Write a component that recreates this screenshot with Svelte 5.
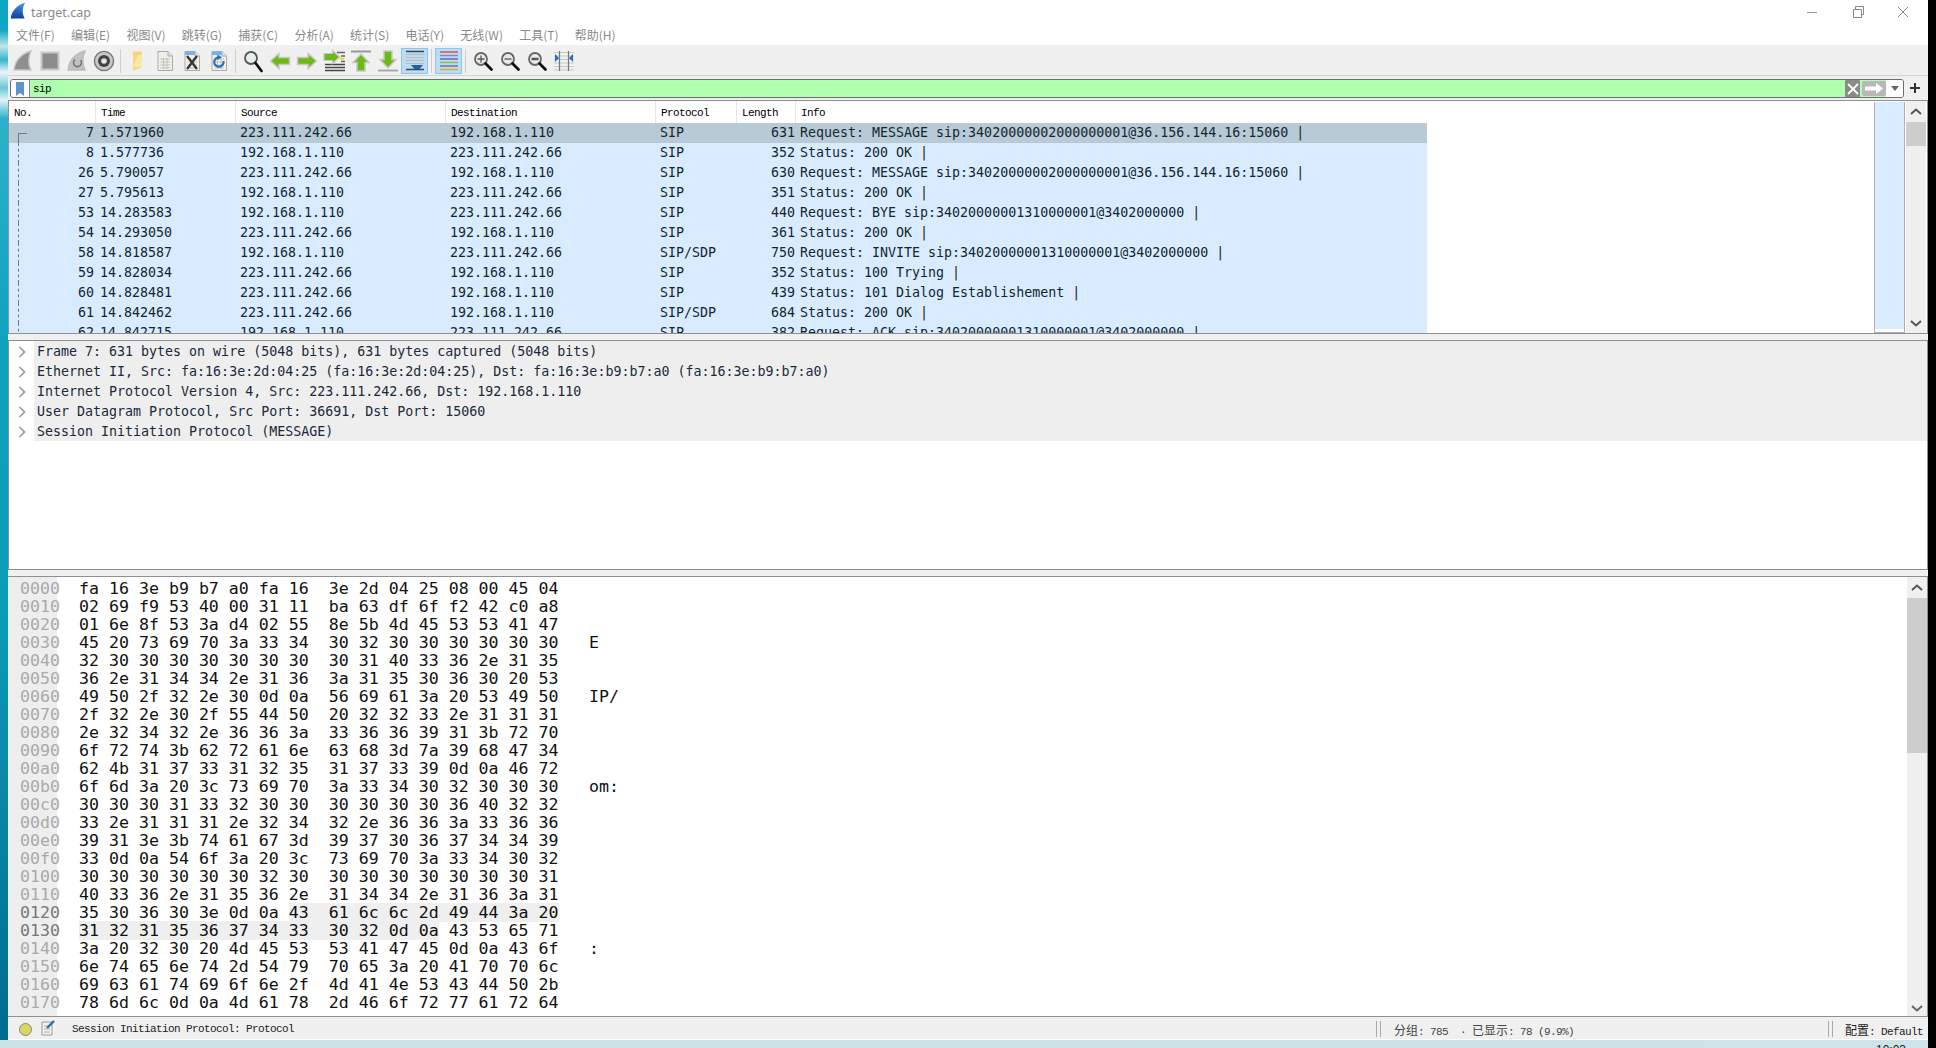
<script>
  const menus = ['文件(F)','编辑(E)','视图(V)','跳转(G)','捕获(C)','分析(A)','统计(S)','电话(Y)','无线(W)','工具(T)','帮助(H)'];
  const cols = ['No.','Time','Source','Destination','Protocol','Length','Info'];
  const A='223.111.242.66', B='192.168.1.110';
  const M='Request: MESSAGE sip:34020000002000000001@36.156.144.16:15060 |';
  const packets = [
    [7,'1.571960',A,B,'SIP',631,M],
    [8,'1.577736',B,A,'SIP',352,'Status: 200 OK |'],
    [26,'5.790057',A,B,'SIP',630,M],
    [27,'5.795613',B,A,'SIP',351,'Status: 200 OK |'],
    [53,'14.283583',B,A,'SIP',440,'Request: BYE sip:34020000001310000001@3402000000 |'],
    [54,'14.293050',A,B,'SIP',361,'Status: 200 OK |'],
    [58,'14.818587',B,A,'SIP/SDP',750,'Request: INVITE sip:34020000001310000001@3402000000 |'],
    [59,'14.828034',A,B,'SIP',352,'Status: 100 Trying |'],
    [60,'14.828481',A,B,'SIP',439,'Status: 101 Dialog Establishement |'],
    [61,'14.842462',A,B,'SIP/SDP',684,'Status: 200 OK |'],
    [62,'14.842715',B,A,'SIP',382,'Request: ACK sip:34020000001310000001@3402000000 |'],
  ];
  const details = [
    'Frame 7: 631 bytes on wire (5048 bits), 631 bytes captured (5048 bits)',
    'Ethernet II, Src: fa:16:3e:2d:04:25 (fa:16:3e:2d:04:25), Dst: fa:16:3e:b9:b7:a0 (fa:16:3e:b9:b7:a0)',
    'Internet Protocol Version 4, Src: 223.111.242.66, Dst: 192.168.1.110',
    'User Datagram Protocol, Src Port: 36691, Dst Port: 15060',
    'Session Initiation Protocol (MESSAGE)',
  ];
  const hex = [
    ['0000','fa 16 3e b9 b7 a0 fa 16','3e 2d 04 25 08 00 45 04',''],
    ['0010','02 69 f9 53 40 00 31 11','ba 63 df 6f f2 42 c0 a8',''],
    ['0020','01 6e 8f 53 3a d4 02 55','8e 5b 4d 45 53 53 41 47',''],
    ['0030','45 20 73 69 70 3a 33 34','30 32 30 30 30 30 30 30','E'],
    ['0040','32 30 30 30 30 30 30 30','30 31 40 33 36 2e 31 35',''],
    ['0050','36 2e 31 34 34 2e 31 36','3a 31 35 30 36 30 20 53',''],
    ['0060','49 50 2f 32 2e 30 0d 0a','56 69 61 3a 20 53 49 50','IP/'],
    ['0070','2f 32 2e 30 2f 55 44 50','20 32 32 33 2e 31 31 31',''],
    ['0080','2e 32 34 32 2e 36 36 3a','33 36 36 39 31 3b 72 70',''],
    ['0090','6f 72 74 3b 62 72 61 6e','63 68 3d 7a 39 68 47 34',''],
    ['00a0','62 4b 31 37 33 31 32 35','31 37 33 39 0d 0a 46 72',''],
    ['00b0','6f 6d 3a 20 3c 73 69 70','3a 33 34 30 32 30 30 30','om:'],
    ['00c0','30 30 30 31 33 32 30 30','30 30 30 30 36 40 32 32',''],
    ['00d0','33 2e 31 31 31 2e 32 34','32 2e 36 36 3a 33 36 36',''],
    ['00e0','39 31 3e 3b 74 61 67 3d','39 37 30 36 37 34 34 39',''],
    ['00f0','33 0d 0a 54 6f 3a 20 3c','73 69 70 3a 33 34 30 32',''],
    ['0100','30 30 30 30 30 30 32 30','30 30 30 30 30 30 30 31',''],
    ['0110','40 33 36 2e 31 35 36 2e','31 34 34 2e 31 36 3a 31',''],
    ['0120','35 30 36 30 3e 0d 0a 43','61 6c 6c 2d 49 44 3a 20','',21,48],
    ['0130','31 32 31 35 36 37 34 33','30 32 0d 0a 43 53 65 71','',0,36],
    ['0140','3a 20 32 30 20 4d 45 53','53 41 47 45 0d 0a 43 6f',':'],
    ['0150','6e 74 65 6e 74 2d 54 79','70 65 3a 20 41 70 70 6c',''],
    ['0160','69 63 61 74 69 6f 6e 2f','4d 41 4e 53 43 44 50 2b',''],
    ['0170','78 6d 6c 0d 0a 4d 61 78','2d 46 6f 72 77 61 72 64',''],
  ];
  function seg(r){
    const l = r[1] + '  ' + r[2];
    if (r[4] === undefined) return [l,'',''];
    return [l.slice(0,r[4]), l.slice(r[4],r[5]), l.slice(r[5])];
  }
</script>

{#snippet fin(fill, stroke)}
  <path d="M3 21 C4 12 10 5 20 2 C17 9 17 15 20 21 Z" fill={fill} stroke={stroke} stroke-width="1.4"/>
{/snippet}

{#snippet doc(fill)}
  <path d="M5 2.5 H15 L19.5 7 V21.5 H5 Z" fill={fill} stroke="#aaa" stroke-width="1"/>
  <path d="M15 2.5 V7 H19.5" fill="#e4e4e4" stroke="#aaa" stroke-width="1"/>
  <path d="M7.5 10 H17 M7.5 13 H17 M7.5 16 H17 M7.5 19 H17 M10.5 9 V20 M14 9 V20" stroke="#c4c4b4" stroke-width="1"/>
{/snippet}

{#snippet lens(inner, w)}
  <circle cx="10" cy="10" r="6" fill="#e8e8e8" stroke="#666" stroke-width="1.8"/>
  <path d="M14.5 14.5 L20.5 20.5" stroke="#111" stroke-width="2.8" stroke-linecap="round"/>
  <path d={inner} stroke="#555" stroke-width={w} fill="none"/>
{/snippet}

<div class="page">
  <div class="desk">
    <div class="main">
      <div class="strip"></div>
      <div class="window">
        <header class="title">
          <svg class="logo" width="16" height="19" viewBox="0 0 24 24">
            <defs><linearGradient id="sh" x1="0" y1="0" x2="0" y2="1"><stop offset="0" stop-color="#4a96e8"/><stop offset="1" stop-color="#0c3f9e"/></linearGradient></defs>
            <path d="M1 24 C2 13 10 4 23 0 C18 8 18 16 22 24 Z" fill="url(#sh)"/>
          </svg>
          <span class="tname">target.cap</span>
          <div class="winbtns">
            <svg width="14" height="14" viewBox="0 0 14 14"><path d="M2 7.5H12" stroke="#999" stroke-width="1"/></svg>
            <svg width="14" height="14" viewBox="0 0 14 14"><path d="M2.5 4.5H10.5V12.5H2.5Z M4.5 4.5V1.5H12.5V9.5H10.5" fill="none" stroke="#888" stroke-width="1"/></svg>
            <svg width="14" height="14" viewBox="0 0 14 14"><path d="M2 2L12 12M12 2L2 12" stroke="#888" stroke-width="1"/></svg>
          </div>
        </header>

        <nav class="menu">
          {#each menus as m}<span>{m}</span>{/each}
        </nav>

        <div class="toolbar">
          <span class="tb"><svg width="24" height="24" viewBox="0 0 24 24">{@render fin('#8f8f8f','#c8c8c8')}</svg></span>
          <span class="tb"><svg width="24" height="24" viewBox="0 0 24 24"><rect x="3.5" y="3.5" width="17" height="17" fill="#8c8c8c" stroke="#c8c8c8" stroke-width="2"/></svg></span>
          <span class="tb"><svg width="24" height="24" viewBox="0 0 24 24">{@render fin('#c2c2c2','#bcbcbc')}<path d="M15.5 11 A4 4 0 1 1 10 10.5" fill="none" stroke="#777" stroke-width="1.6"/></svg></span>
          <span class="tb"><svg width="24" height="24" viewBox="0 0 24 24"><circle cx="12" cy="12" r="9.6" fill="#c8c8c8" stroke="#777" stroke-width="1.4"/><circle cx="12" cy="12" r="6" fill="#444"/><circle cx="12" cy="12" r="2.8" fill="#e8e8e8"/></svg></span>
          <i class="sep"></i>
          <span class="tb"><svg width="24" height="24" viewBox="0 0 24 24"><path d="M7 2.5H16V18L7 22Z" fill="#f7d77a"/><path d="M12 6H16V18H7" fill="#fbe7a6"/></svg></span>
          <span class="tb"><svg width="24" height="24" viewBox="0 0 24 24">{@render doc('#eeeeea')}</svg></span>
          <span class="tb"><svg width="24" height="24" viewBox="0 0 24 24">{@render doc('#f4f2e4')}<path d="M5 2.5H15V6H5Z" fill="#74b2e8"/><path d="M7 7L17 20M17 7L7 20" stroke="#333" stroke-width="2.2"/></svg></span>
          <span class="tb"><svg width="24" height="24" viewBox="0 0 24 24">{@render doc('#f4f2e4')}<path d="M5 2.5H15V6H5Z" fill="#74b2e8"/><path d="M16.5 12 A4.7 4.7 0 1 1 12 8.3" fill="none" stroke="#2a6fc0" stroke-width="2.2"/><path d="M10.5 5.5L15 8.3L10.5 11Z" fill="#2a6fc0"/></svg></span>
          <i class="sep"></i>
          <span class="tb"><svg width="24" height="24" viewBox="0 0 24 24"><circle cx="10" cy="9" r="6" fill="#e6eef0" stroke="#555" stroke-width="1.8"/><path d="M14.5 14 L20.5 22" stroke="#111" stroke-width="2.8" stroke-linecap="round"/></svg></span>
          <span class="tb"><svg width="24" height="24" viewBox="0 0 24 24"><path d="M2.5 12 L11 4.5 V8.5 H21.5 V15.5 H11 V19.5 Z" fill="#6cb814" stroke="#c8c8c8" stroke-width="1.5"/></svg></span>
          <span class="tb"><svg width="24" height="24" viewBox="0 0 24 24"><path d="M21.5 12 L13 4.5 V8.5 H2.5 V15.5 H13 V19.5 Z" fill="#6cb814" stroke="#c8c8c8" stroke-width="1.5"/></svg></span>
          <span class="tb"><svg width="24" height="24" viewBox="0 0 24 24"><path d="M15 3.5H23M19 7H23M19 12.5H23" stroke="#666" stroke-width="1.3"/><path d="M18 9.7H22" stroke="#f0d020" stroke-width="2"/><path d="M3 15.5H23M3 18.5H23M3 21.5H23" stroke="#444" stroke-width="1.5"/><path d="M17.5 8 L10.5 1.5 V4.5 H2 V11.5 H10.5 V14.5 Z" fill="#6cb814" stroke="#c8c8c8" stroke-width="1.2"/></svg></span>
          <span class="tb"><svg width="24" height="24" viewBox="0 0 24 24"><path d="M2 2.5H22" stroke="#999" stroke-width="2"/><path d="M12 5 L20 13.5 H16 V22 H8 V13.5 H4 Z" fill="#6cb814" stroke="#c8c8c8" stroke-width="1.5"/></svg></span>
          <span class="tb"><svg width="24" height="24" viewBox="0 0 24 24"><path d="M2 21.5H22" stroke="#aaa" stroke-width="2"/><path d="M12 19 L20 10.5 H16 V2 H8 V10.5 H4 Z" fill="#6cb814" stroke="#c8c8c8" stroke-width="1.5"/></svg></span>
          <span class="tb on"><svg width="24" height="24" viewBox="0 0 24 24"><path d="M3 2.5H21M3 20.5H21" stroke="#444" stroke-width="1.4"/><path d="M3 5.5H21M3 8.5H21M3 11.5H21M3 14.5H21" stroke="#bbb" stroke-width="1.2"/><path d="M8 16H20L16.5 20H11.5Z" fill="#1f5fa8"/></svg></span>
          <i class="sep"></i>
          <span class="tb on"><svg width="24" height="24" viewBox="0 0 24 24"><path d="M3 3H21" stroke="#d85050" stroke-width="1.5"/><path d="M3 6.5H21" stroke="#8888c0" stroke-width="1.5"/><path d="M3 10H21" stroke="#6a6ab0" stroke-width="1.5"/><path d="M3 13.5H21" stroke="#88c040" stroke-width="1.5"/><path d="M3 17H21" stroke="#7070a8" stroke-width="1.5"/><path d="M3 20.5H21" stroke="#d8b030" stroke-width="1.5"/></svg></span>
          <i class="sep"></i>
          <span class="tb"><svg width="24" height="24" viewBox="0 0 24 24">{@render lens('M6.5 10H13.5M10 6.5V13.5', 1.3)}</svg></span>
          <span class="tb"><svg width="24" height="24" viewBox="0 0 24 24">{@render lens('M6.5 10H13.5', 1.3)}</svg></span>
          <span class="tb"><svg width="24" height="24" viewBox="0 0 24 24">{@render lens('M6.5 10H13.5', 2.4)}</svg></span>
          <span class="tb"><svg width="24" height="24" viewBox="0 0 24 24"><path d="M2 3.5H22M2 7H22M2 10.5H22M2 14H22M2 17.5H22M2 21H22" stroke="#c8c8c8" stroke-width="1.2"/><path d="M7.5 2V22M16.5 2V22" stroke="#777" stroke-width="1.2"/><path d="M3 5V13L7 9Z M21 5V13L17 9Z" fill="#2a6fc0"/></svg></span>
        </div>

        <div class="filterrow">
          <div class="filter">
            <span class="bm"><svg width="10" height="14" viewBox="0 0 10 14"><path d="M1 0H9V14L5 11L1 14Z" fill="#5f92cf"/></svg></span>
            <span class="ftext">sip</span>
            <span class="fclear"><svg width="14" height="14" viewBox="0 0 14 14"><path d="M2 2L12 12M12 2L2 12" stroke="#fff" stroke-width="1.8"/></svg></span>
            <span class="fapply"><svg width="18" height="11" viewBox="0 0 18 11"><path d="M0 3.5H11V0L18 5.5L11 11V7.5H0Z" fill="#fff"/></svg></span>
            <span class="fdrop"><svg width="8" height="5" viewBox="0 0 8 5"><path d="M0 0H8L4 5Z" fill="#666"/></svg></span>
          </div>
          <span class="plus"><svg width="10" height="10" viewBox="0 0 10 10"><path d="M5 0V10M0 5H10" stroke="#333" stroke-width="2"/></svg></span>
        </div>

        <section class="plist">
          <div class="ptable">
            <div class="phead">
              {#each cols as c}<span class="hcell">{c}</span>{/each}
            </div>
            <div class="pbody">
              {#each packets as p, i}
                <div class="prow" class:sel={i === 0}>
                  <span class="rel" class:first={i === 0}></span>
                  <span class="no">{p[0]}</span>
                  <span class="time">{p[1]}</span>
                  <span class="addr">{p[2]}</span>
                  <span class="addr">{p[3]}</span>
                  <span class="proto">{p[4]}</span>
                  <span class="len">{p[5]}</span>
                  <span class="info">{p[6]}</span>
                </div>
              {/each}
            </div>
          </div>
          <div class="mini"></div>
          <div class="sbar">
            <svg class="up" width="12" height="7" viewBox="0 0 12 7"><path d="M1 6L6 1.5L11 6" fill="none" stroke="#555" stroke-width="2"/></svg>
            <div class="thumb small"></div>
            <div class="grow"></div>
            <svg width="12" height="7" viewBox="0 0 12 7"><path d="M1 1L6 5.5L11 1" fill="none" stroke="#555" stroke-width="2"/></svg>
          </div>
        </section>

        <div class="split"></div>

        <section class="dpanel">
          {#each details as d}
            <div class="drow">
              <svg width="8" height="12" viewBox="0 0 8 12"><path d="M1.5 1L6.5 6L1.5 11" fill="none" stroke="#999" stroke-width="1.6"/></svg>
              <span class="dtext">{d}</span>
            </div>
          {/each}
        </section>

        <div class="split"></div>

        <section class="hpanel">
          <div class="hexwrap">
            {#each hex as r}
              {@const s = seg(r)}
              <div class="hrow">
                <span class="off" class:dark={r[4] !== undefined}>{r[0]}</span>
                <span class="bytes">{s[0]}<span class="hl">{s[1]}</span>{s[2]}</span>
                <span class="asc">{r[3]}</span>
              </div>
            {/each}
          </div>
          <div class="sbar hs">
            <svg class="up" width="12" height="7" viewBox="0 0 12 7"><path d="M1 6L6 1.5L11 6" fill="none" stroke="#555" stroke-width="2"/></svg>
            <div class="thumb big"></div>
            <div class="grow"></div>
            <svg width="12" height="7" viewBox="0 0 12 7"><path d="M1 1L6 5.5L11 1" fill="none" stroke="#666" stroke-width="2"/></svg>
          </div>
        </section>

        <footer class="status">
          <span class="dot"></span>
          <svg class="note" width="14" height="16" viewBox="0 0 14 16"><path d="M1 2H11V15H1Z" fill="#f4f4ec" stroke="#999" stroke-width="1"/><path d="M3 6H9M3 9H9M3 12H9" stroke="#aaa" stroke-width="1"/><path d="M6 8L13 1" stroke="#2c6fb0" stroke-width="2.4"/></svg>
          <span class="smsg">Session Initiation Protocol: Protocol</span>
          <span class="grip"></span>
          <span class="mid"><b>分组</b>: 785  ·  <b>已显示</b>: 78 (9.9%)</span>
          <span class="grip"></span>
          <span class="prof"><b>配置</b>: Default</span>
        </footer>
      </div>
    </div>
    <div class="band"><span class="clock">10:03</span></div>
  </div>
  <div class="black"></div>
</div>

<style>
  :global(body){margin:0;background:#000;overflow:hidden;}
  .page{display:flex;width:1936px;height:1048px;overflow:hidden;font-family:"DejaVu Sans Mono","Liberation Mono",monospace;}
  .desk{width:1928px;height:1048px;display:flex;flex-direction:column;}
  .black{width:8px;background:#000;}
  .main{display:flex;height:1040px;}
  .strip{width:8px;background:linear-gradient(180deg,#10a4c4 0,#12a6c6 30px,#bfe7ee 46px,#39b5cf 60px,#e8f6f8 72px,#6cc8da 88px,#dff3f6 100px,#2fb0ca 118px,#0fa3c0 330px,#0a9dbb 600px,#0a86a6 800px,#006b8c 1040px);}
  .window{width:1920px;display:flex;flex-direction:column;background:#fff;}
  .band{height:8px;background:linear-gradient(90deg,#cbe2e7,#cde3e8);position:relative;overflow:hidden;}
  .clock{position:absolute;left:1876px;top:3px;font:12px "Liberation Sans",sans-serif;color:#222;}

  .title{height:24px;display:flex;align-items:center;padding-left:2px;}
  .logo{margin-top:-4px;}
  .tname{font:12.5px "Noto Sans","Liberation Sans",sans-serif;color:#8a8a8a;margin-left:5px;}
  .winbtns{margin-left:auto;display:flex;gap:31.5px;padding-right:18px;margin-top:-1px;}

  .menu{height:21px;display:flex;gap:16.25px;padding-left:8px;align-items:center;font:12px "Noto Sans CJK SC",sans-serif;color:#8a8a8a;border-bottom:1px solid #efefef;}
  .menu span{white-space:nowrap;}

  .toolbar{height:29px;background:#f0f0f0;border-bottom:1px solid #d4d4d4;display:flex;align-items:center;padding-left:1px;}
  .tb{width:27px;height:26px;display:flex;align-items:center;justify-content:center;box-sizing:border-box;flex:none;}
  .tb.on{background:#bcdcf4;border:1px solid #8ec5f0;}
  .sep{width:1px;height:24px;background:#cfcfcf;margin:0 3px;flex:none;}

  .filterrow{height:24px;background:#f0f0f0;display:flex;align-items:center;padding-left:2px;}
  .filter{width:1894px;height:19px;margin-top:1px;border:1px solid #6d6d6d;border-radius:3px;background:#afffaf;display:flex;align-items:center;box-sizing:border-box;overflow:hidden;}
  .bm{width:18px;height:100%;background:#fff;border-right:1px solid #888;display:flex;align-items:center;justify-content:center;flex:none;}
  .ftext{font:11px "Liberation Mono",monospace;letter-spacing:-.6px;color:#000;margin-left:3px;flex:1;}
  .fclear{width:15px;height:17px;background:#8a8a8a;display:flex;align-items:center;justify-content:center;border-radius:1px;}
  .fapply{width:24px;height:15px;margin-left:2px;background:#b8b8b8;border-radius:2px;display:flex;align-items:center;justify-content:center;}
  .fdrop{width:17px;height:100%;background:#fff;display:flex;align-items:center;justify-content:center;}
  .plus{width:22px;display:flex;justify-content:center;}

  .plist{height:234px;display:flex;border:1px solid #8f8f96;box-sizing:border-box;background:#fff;overflow:hidden;}
  .ptable{width:1865px;overflow:hidden;flex:none;}
  .phead{height:22px;display:flex;font:11px "Liberation Mono",monospace;letter-spacing:-.6px;color:#000;}
  .hcell{box-sizing:border-box;padding-left:5px;line-height:24px;border-right:1px solid #e6e6e6;}
  .hcell:nth-child(1){width:87px}
  .hcell:nth-child(2){width:140px}
  .hcell:nth-child(3){width:210px}
  .hcell:nth-child(4){width:210px}
  .hcell:nth-child(5){width:81px}
  .hcell:nth-child(6){width:59px}
  .hcell:nth-child(7){border-right:0}
  .pbody{height:210px;overflow:hidden;}
  .prow{width:1418px;height:20px;display:flex;background:#d9ecff;font-size:13.3px;line-height:20px;color:#12272e;position:relative;white-space:pre;}
  .prow.sel{background:#b9cad7;}
  .rel{position:absolute;left:9px;top:0;height:20px;border-left:1px dashed #777;}
  .rel.first{top:10px;height:10px;width:8px;border-left:1px solid #777;border-top:1px solid #777;}
  .no{width:85px;text-align:right;flex:none;}
  .time{width:146px;padding-left:6px;box-sizing:border-box;flex:none;}
  .addr{width:210px;flex:none;}
  .proto{width:81px;flex:none;}
  .len{width:54px;text-align:right;flex:none;}
  .info{padding-left:5px;}
  .mini{width:31px;background:#d9ecff;border:1px solid #b0b0b0;border-width:0 1px 1px 1px;box-shadow:inset 0 -3px 0 #fff;box-sizing:border-box;flex:none;margin-top:1px;}
  .sbar{width:20px;background:#f0f0f0;display:flex;flex-direction:column;align-items:center;margin-left:1px;padding-bottom:6px;box-sizing:border-box;flex:none;}
  .sbar .up{margin-top:7px;}
  .thumb{width:100%;background:#cdcdcd;flex:none;}
  .thumb.small{height:24px;margin-top:7px;}
  .thumb.big{height:155px;margin-top:7px;}
  .grow{flex:1;}

  .split{height:6px;background:#f0f0f0;}
  .dpanel{height:230px;border:1px solid #8f8f96;box-sizing:border-box;background:#fff;font-size:13.3px;color:#1a2a3a;}
  .drow{height:20px;display:flex;align-items:center;}
  .drow svg{margin-left:9px;margin-right:8px;flex:none;margin-top:1px;}
  .dtext{flex:1;height:20px;background:#eeeeee;line-height:22px;white-space:pre;padding-left:3px;}

  .hpanel{height:441px;display:flex;border-top:1px solid #8f8f96;border-bottom:1px solid #8f8f96;border-right:1px solid #8f8f96;box-sizing:border-box;background:#fff;}
  .hexwrap{flex:1;display:flex;flex-direction:column;padding-top:3px;background:linear-gradient(90deg,#eeeeee 49px,#fff 49px);font-size:16.6px;color:#111;}
  .hrow{height:18px;line-height:18px;display:flex;white-space:pre;}
  .off{width:71px;padding-left:12px;box-sizing:border-box;color:#aaa;flex:none;}
  .off.dark{color:#777;}
  .bytes{width:510px;flex:none;}
  .hl{background:#efefef;}
  .sbar.hs{padding-bottom:4px;margin-left:0;}

  .status{height:22px;background:#f0f0f0;display:flex;align-items:center;font:11px "Liberation Mono","Noto Sans CJK SC",monospace;letter-spacing:-.6px;color:#222;padding-top:2px;box-sizing:border-box;}
  .status b{font:12px "Noto Sans CJK SC",sans-serif;letter-spacing:0;}
  .dot{width:13px;height:13px;margin-left:11px;border-radius:50%;background:#d8d860;border:1px solid #888;box-sizing:border-box;flex:none;}
  .note{margin-left:9px;margin-top:-3px;flex:none;}
  .smsg{flex:1;margin-left:17px;white-space:pre;}
  .grip{width:3px;height:16px;border-left:1px solid #aaa;border-right:1px solid #aaa;flex:none;}
  .mid{width:434px;margin-left:13px;white-space:pre;color:#444;flex:none;}
  .prof{width:83px;margin-left:12px;white-space:pre;flex:none;}
</style>
